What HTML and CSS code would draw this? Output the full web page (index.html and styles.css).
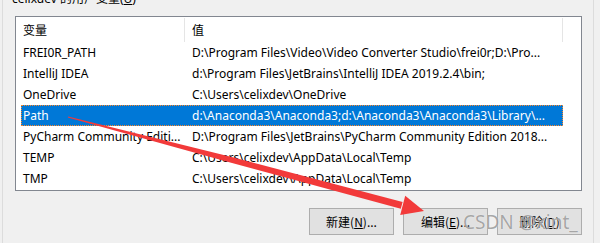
FILE: index.html
```html
<!DOCTYPE html>
<html lang="zh-CN">
<head>
<meta charset="utf-8">
<title>环境变量</title>
<link rel="stylesheet" href="styles.css">
</head>
<body>
<div class="group">
  <div class="caption">celixdev 的用户变量(<u>U</u>)</div>
  <div class="list">
    <div class="header">
      <div class="hcell c1">变量</div>
      <div class="hcell c2">值</div>
    </div>
    <div class="row"><div class="cell c1">FREI0R_PATH</div><div class="cell c2">D:\Program Files\Video\Video Converter Studio\frei0r;D:\Pro...</div></div>
    <div class="row"><div class="cell c1">IntelliJ IDEA</div><div class="cell c2">d:\Program Files\JetBrains\IntelliJ IDEA 2019.2.4\bin;</div></div>
    <div class="row"><div class="cell c1">OneDrive</div><div class="cell c2">C:\Users\celixdev\OneDrive</div></div>
    <div class="row selected"><div class="cell c1">Path</div><div class="cell c2">d:\Anaconda3\Anaconda3;d:\Anaconda3\Anaconda3\Library\...</div></div>
    <div class="row"><div class="cell c1">PyCharm Community Editi...</div><div class="cell c2">D:\Program Files\JetBrains\PyCharm Community Edition 2018...</div></div>
    <div class="row"><div class="cell c1">TEMP</div><div class="cell c2">C:\Users\celixdev\AppData\Local\Temp</div></div>
    <div class="row"><div class="cell c1">TMP</div><div class="cell c2">C:\Users\celixdev\AppData\Local\Temp</div></div>
  </div>
  <div class="buttons">
    <button class="btn">新建(<u>N</u>)...</button>
    <button class="btn">编辑(<u>E</u>)...</button>
    <button class="btn">删除(<u>D</u>)</button>
  </div>
</div>
<svg class="arrow" width="600" height="243" viewBox="0 0 600 243">
  <polygon points="68.13,116.52 230.71,156.79 402.6,202.0 400.8,208.8 229.29,162.21 67.87,117.48" fill="#f23a3a"/>
  <polygon points="424,211 405.2,195.7 400.2,215.1" fill="#f23a3a"/>
</svg>
<div class="watermark">CSDN @xint_</div>
</body>
</html>
```
FILE: styles.css
```css
html, body {
  margin: 0;
  padding: 0;
}
body {
  width: 600px;
  height: 243px;
  overflow: hidden;
  background: #f0f0f0;
  font-family: "Noto Sans", "Noto Sans CJK SC", sans-serif;
  font-size: 12px;
  color: #000;
  position: relative;
}
.group {
  margin-left: 2px;
  width: 592px;
  height: 260px;
  box-sizing: border-box;
  border-left: 1px solid #dcdcdc;
  border-right: 1px solid #dcdcdc;
}
.caption {
  margin-top: -9px;
  height: 16px;
  line-height: 16px;
  padding-left: 9px;
  white-space: nowrap;
}
.list {
  margin-top: 9px;
  margin-left: 12px;
  width: 567px;
  height: 175px;
  box-sizing: border-box;
  border: 1px solid #828790;
  background: #fff;
  overflow: hidden;
}
.header {
  display: flex;
  height: 25px;
}
.hcell {
  box-sizing: border-box;
  margin-top: 1px;
  height: 24px;
  line-height: 24px;
  padding-left: 7px;
  border-right: 1px solid #e5e5e5;
  white-space: nowrap;
  font-family: "Noto Sans CJK SC", sans-serif;
}
.hcell.c1 { width: 169px; }
.hcell.c2 { width: 378px; }
.row {
  display: flex;
  margin-left: 5px;
  width: 542px;
  height: 21px;
  line-height: 21px;
}
.cell {
  box-sizing: border-box;
  white-space: nowrap;
  overflow: hidden;
}
.cell.c1 { width: 163px; padding-left: 2px; }
.cell.c2 { width: 379px; padding-left: 8px; }
.row.selected {
  background: #0078d7;
  color: #fff;
  outline: 1px dotted #ff8728;
  outline-offset: -1px;
}
.buttons {
  display: flex;
  justify-content: flex-end;
  gap: 9px;
  margin-top: 17px;
  padding-right: 11px;
}
.btn {
  width: 85px;
  height: 27px;
  padding: 0;
  margin: 0;
  background: #e1e1e1;
  border: 1px solid #adadad;
  font-family: "Noto Sans CJK SC", "Noto Sans", sans-serif;
  font-size: 12px;
  color: #000;
}
.arrow {
  position: absolute;
  left: 0;
  top: 0;
}
.watermark {
  position: absolute;
  left: 463px;
  top: 209px;
  font-family: "Noto Sans", sans-serif;
  font-size: 19px;
  line-height: 26px;
  color: rgba(110, 110, 110, 0.6);
  text-shadow: 0 0 1px rgba(255,255,255,0.9);
  white-space: nowrap;
}
```
